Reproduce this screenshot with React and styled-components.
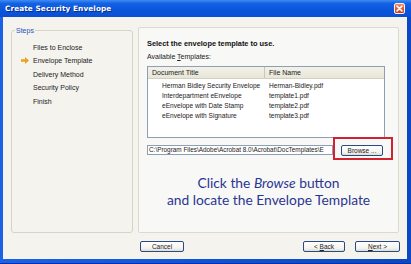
import styled, { createGlobalStyle } from "styled-components";

const GlobalStyle = createGlobalStyle`
html, body { margin: 0; padding: 0; background: #fff; }
body { font-family: "Liberation Sans", Arial, sans-serif; }
`;

const steps = [
    { label: "Files to Enclose" },
    { label: "Envelope Template", current: true },
    { label: "Delivery Method" },
    { label: "Security Policy" },
    { label: "Finish" },
];

const templates = [
    ["Herman Bidley Security Envelope", "Herman-Bidley.pdf"],
    ["Interdepartment eEnvelope", "template1.pdf"],
    ["eEnvelope with Date Stamp", "template2.pdf"],
    ["eEnvelope with Signature", "template3.pdf"],
];

function App() {
    return (
        <>
            <GlobalStyle />
            <Window>
                <TitleBar>
                    <Title>Create Security Envelope</Title>
                    <CloseBtn>
                        <svg width="7" height="7" viewBox="0 0 7 7">
                            <path d="M1 1L6 6M6 1L1 6" stroke="#fff" strokeWidth="1.6" strokeLinecap="round" />
                        </svg>
                    </CloseBtn>
                </TitleBar>
                <Body>
                    <Main>
                        <StepsBox>
                            <StepsLegend>Steps</StepsLegend>
                            <StepList>
                                {steps.map((s) => (
                                    <StepItem key={s.label}>
                                        <StepMark>
                                            {s.current && (
                                                <svg width="8" height="7" viewBox="0 0 8 7">
                                                    <path d="M0 2.2H4V0L8 3.5L4 7V4.8H0Z" fill="#e6a41e" />
                                                </svg>
                                            )}
                                        </StepMark>
                                        {s.label}
                                    </StepItem>
                                ))}
                            </StepList>
                        </StepsBox>
                        <Panel>
                            <Heading>Select the envelope template to use.</Heading>
                            <Label>
                                Available <u>T</u>emplates:
                            </Label>
                            <ListBox>
                                <ListHead>
                                    <HeadCell $w={117}>Document Title</HeadCell>
                                    <HeadCell>File Name</HeadCell>
                                </ListHead>
                                {templates.map(([title, file]) => (
                                    <ListRow key={file}>
                                        <RowCell $w={117} $indent={14}>{title}</RowCell>
                                        <RowCell $indent={4}>{file}</RowCell>
                                    </ListRow>
                                ))}
                            </ListBox>
                            <PathRow>
                                <PathField>C:\Program Files\Adobe\Acrobat 8.0\Acrobat\DocTemplates\E</PathField>
                                <Highlight>
                                    <Button $w={42} $h={11}>Browse ...</Button>
                                </Highlight>
                            </PathRow>
                            <Hint>
                                Click the <em>Browse</em> button
                                <br />
                                and locate the Envelope Template
                            </Hint>
                        </Panel>
                    </Main>
                    <Footer>
                        <Button $w={44} $h={11}>Cancel</Button>
                        <FooterRight>
                            <Button $w={42} $h={11}>
                                &lt; <u>B</u>ack
                            </Button>
                            <Button $w={45} $h={11}>
                                <u>N</u>ext &gt;
                            </Button>
                        </FooterRight>
                    </Footer>
                </Body>
            </Window>
        </>
    );
}

const Window = styled.div`
width: 411px;
height: 264px;
box-sizing: border-box;
display: flex;
flex-direction: column;
padding: 0 4px 4px 3px;
background: linear-gradient(90deg, #1c62e6 0%, #0b54d8 50%, #0a48c4 100%);
border-bottom: 1px solid #062f9c;`

const TitleBar = styled.div`
height: 17px;
margin: 0 -4px 0 -3px;
padding: 0 6px 0 5px;
display: flex;
align-items: center;
justify-content: space-between;
background: linear-gradient(180deg, #3f8cf3 0%, #1462e4 20%, #0a55dc 60%, #0a4fd2 100%);`

const Title = styled.div`
color: #fff;
font-family: "DejaVu Sans", Verdana, sans-serif;
font-size: 7.3px;
font-weight: 700;
letter-spacing: 0.1px;
text-shadow: 1px 1px 0 #0a2a80;`

const CloseBtn = styled.div`
width: 11px;
height: 11px;
box-sizing: border-box;
border: 1px solid #f4f4f4;
border-radius: 2px;
background: linear-gradient(180deg, #f08a60 0%, #e05428 60%, #c83e1a 100%);
display: flex;
align-items: center;
justify-content: center;`

const Body = styled.div`
flex: 1;
display: flex;
flex-direction: column;
background: #f4f3ee;
padding: 10px 8px 0 8px;`

const Main = styled.div`
display: flex;
gap: 5px;
height: 206px;`

const StepsBox = styled.fieldset`
width: 122px;
box-sizing: border-box;
margin: 0;
padding: 9px 0 0 0;
border: 1px solid #d6d3c7;
border-radius: 3px;`

const StepsLegend = styled.legend`
margin-left: 3px;
padding: 0 1px;
font-size: 7px;
color: #2752b8;`

const StepList = styled.div`
display: flex;
flex-direction: column;
gap: 4.4px;`

const StepItem = styled.div`
display: flex;
align-items: center;
height: 9px;
font-size: 7px;
color: #222;`

const StepMark = styled.span`
width: 21px;
padding-left: 9px;
box-sizing: border-box;
display: flex;
align-items: center;`

const Panel = styled.div`
flex: 1;
box-sizing: border-box;
border: 1px solid #dcd9ce;
border-radius: 2px;
background: #f8f8f6;
padding: 11px 0 0 8px;
display: flex;
flex-direction: column;`

const Heading = styled.div`
font-size: 7.4px;
font-weight: 700;
color: #111;
height: 10px;`

const Label = styled.div`
margin-top: 4px;
font-size: 7px;
color: #222;
height: 9px;`

const ListBox = styled.div`
margin-top: 4px;
width: 238px;
height: 72px;
box-sizing: border-box;
border: 1px solid #8e9fb4;
background: #fff;`

const ListHead = styled.div`
display: flex;
height: 11px;
background: linear-gradient(180deg, #f4f2e8 0%, #e8e6d8 100%);
border-bottom: 1px solid #d4d0c0;
margin-bottom: 1px;`

const HeadCell = styled.div`
width: ${(p) => (p.$w ? p.$w + "px" : "auto")};
flex: ${(p) => (p.$w ? "none" : "1")};
box-sizing: border-box;
padding-left: 4px;
font-size: 7px;
line-height: 11px;
color: #222;
border-right: ${(p) => (p.$w ? "1px solid #cbc7b8" : "none")};`

const ListRow = styled.div`
display: flex;
height: 10px;
align-items: center;`

const RowCell = styled.div`
width: ${(p) => (p.$w ? p.$w + "px" : "auto")};
flex: ${(p) => (p.$w ? "none" : "1")};
box-sizing: border-box;
padding-left: ${(p) => p.$indent}px;
font-size: 6.6px;
color: #222;
white-space: nowrap;`

const PathRow = styled.div`
display: flex;
align-items: flex-start;
margin-top: -1px;`

const PathField = styled.div`
margin-top: 8px;
width: 186px;
height: 10px;
box-sizing: border-box;
border: 1px solid #8e9fb4;
background: #fff;
font-size: 6.4px;
line-height: 8px;
padding-left: 1px;
color: #222;
white-space: nowrap;
overflow: hidden;`

const Highlight = styled.div`
width: 60px;
height: 23px;
box-sizing: border-box;
border: 2px solid #d02230;
padding: 6px 0 0 6px;`

const Button = styled.div`
width: ${(p) => p.$w}px;
height: ${(p) => p.$h}px;
box-sizing: border-box;
border: 1px solid #2a4a86;
border-radius: 2px;
background: linear-gradient(180deg, #ffffff 0%, #f4f3ee 70%, #dedbcf 100%);
font-size: 6.5px;
color: #222;
display: flex;
align-items: center;
justify-content: center;
white-space: pre;`

const Hint = styled.div`
margin: 14px 8px 0 0;
text-align: center;
font-family: Lato, "Open Sans", sans-serif;
font-size: 13.8px;
line-height: 17px;
color: #2b3592;
em { font-style: italic; }`

const Footer = styled.div`
display: flex;
align-items: center;
margin-top: 8px;
padding-left: 129px;`

const FooterRight = styled.div`
margin-left: auto;
margin-right: -1px;
display: flex;
gap: 10px;`

export default App;
